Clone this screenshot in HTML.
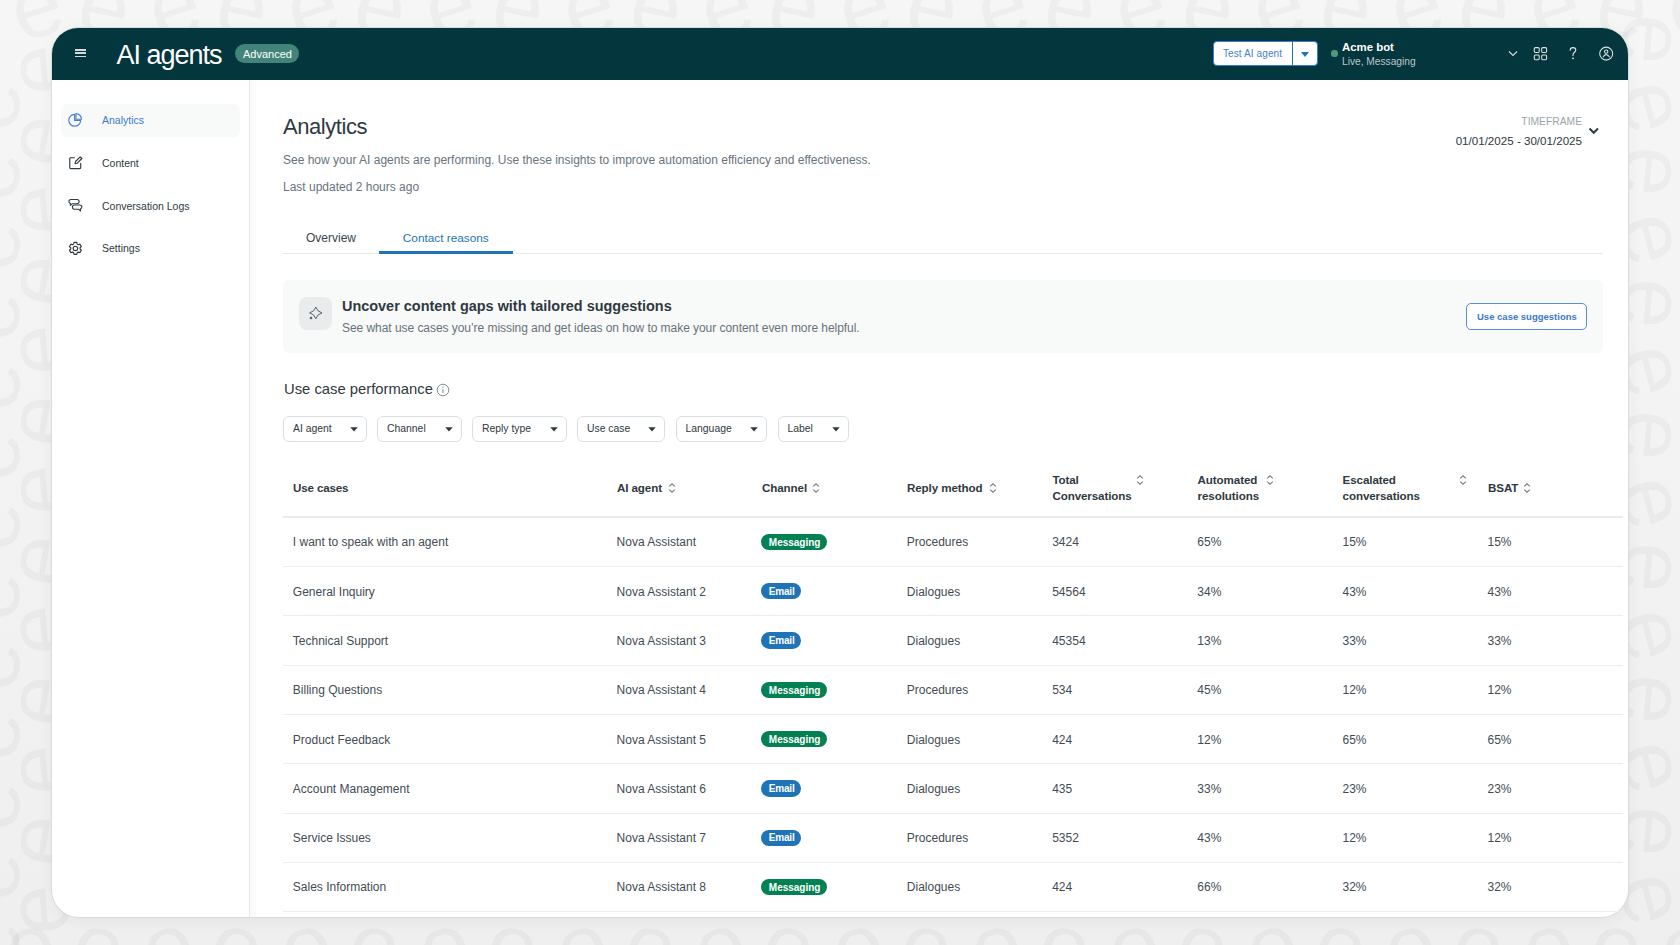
<!DOCTYPE html><html><head><meta charset="utf-8"><style>
html,body{margin:0;padding:0;width:1680px;height:945px;overflow:hidden;background:linear-gradient(#f6f6f6,#efefef);font-family:"Liberation Sans",sans-serif;}
.t{position:absolute;white-space:nowrap;}
.r{position:absolute;}
#bgp{position:absolute;left:0;top:0;width:1680px;height:945px;}
#win{position:absolute;left:52px;top:28px;width:1576px;height:889px;background:#fff;border-radius:27px;overflow:hidden;box-shadow:0 0 0 1px #d9dcde, 0 3px 16px rgba(0,0,0,0.06);}
</style></head><body>
<svg id="bgp" width="1680" height="945" viewBox="0 0 1680 945"><g font-family="Liberation Sans" font-weight="400" font-size="90" fill="#000" fill-opacity="0.03"><text x="36" y="6" text-anchor="middle" dominant-baseline="central" transform="rotate(-18 36 6)">e</text><text x="30" y="946" text-anchor="middle" dominant-baseline="central" transform="rotate(-15 30 946)">e</text><text x="105" y="6" text-anchor="middle" dominant-baseline="central" transform="rotate(12 105 6)">e</text><text x="99" y="946" text-anchor="middle" dominant-baseline="central" transform="rotate(12 99 946)">e</text><text x="174" y="6" text-anchor="middle" dominant-baseline="central" transform="rotate(-18 174 6)">e</text><text x="168" y="946" text-anchor="middle" dominant-baseline="central" transform="rotate(-15 168 946)">e</text><text x="243" y="6" text-anchor="middle" dominant-baseline="central" transform="rotate(12 243 6)">e</text><text x="237" y="946" text-anchor="middle" dominant-baseline="central" transform="rotate(12 237 946)">e</text><text x="312" y="6" text-anchor="middle" dominant-baseline="central" transform="rotate(-18 312 6)">e</text><text x="306" y="946" text-anchor="middle" dominant-baseline="central" transform="rotate(-15 306 946)">e</text><text x="381" y="6" text-anchor="middle" dominant-baseline="central" transform="rotate(12 381 6)">e</text><text x="375" y="946" text-anchor="middle" dominant-baseline="central" transform="rotate(12 375 946)">e</text><text x="450" y="6" text-anchor="middle" dominant-baseline="central" transform="rotate(-18 450 6)">e</text><text x="444" y="946" text-anchor="middle" dominant-baseline="central" transform="rotate(-15 444 946)">e</text><text x="519" y="6" text-anchor="middle" dominant-baseline="central" transform="rotate(12 519 6)">e</text><text x="513" y="946" text-anchor="middle" dominant-baseline="central" transform="rotate(12 513 946)">e</text><text x="588" y="6" text-anchor="middle" dominant-baseline="central" transform="rotate(-18 588 6)">e</text><text x="582" y="946" text-anchor="middle" dominant-baseline="central" transform="rotate(-15 582 946)">e</text><text x="657" y="6" text-anchor="middle" dominant-baseline="central" transform="rotate(12 657 6)">e</text><text x="651" y="946" text-anchor="middle" dominant-baseline="central" transform="rotate(12 651 946)">e</text><text x="726" y="6" text-anchor="middle" dominant-baseline="central" transform="rotate(-18 726 6)">e</text><text x="720" y="946" text-anchor="middle" dominant-baseline="central" transform="rotate(-15 720 946)">e</text><text x="795" y="6" text-anchor="middle" dominant-baseline="central" transform="rotate(12 795 6)">e</text><text x="789" y="946" text-anchor="middle" dominant-baseline="central" transform="rotate(12 789 946)">e</text><text x="864" y="6" text-anchor="middle" dominant-baseline="central" transform="rotate(-18 864 6)">e</text><text x="858" y="946" text-anchor="middle" dominant-baseline="central" transform="rotate(-15 858 946)">e</text><text x="933" y="6" text-anchor="middle" dominant-baseline="central" transform="rotate(12 933 6)">e</text><text x="927" y="946" text-anchor="middle" dominant-baseline="central" transform="rotate(12 927 946)">e</text><text x="1002" y="6" text-anchor="middle" dominant-baseline="central" transform="rotate(-18 1002 6)">e</text><text x="996" y="946" text-anchor="middle" dominant-baseline="central" transform="rotate(-15 996 946)">e</text><text x="1071" y="6" text-anchor="middle" dominant-baseline="central" transform="rotate(12 1071 6)">e</text><text x="1065" y="946" text-anchor="middle" dominant-baseline="central" transform="rotate(12 1065 946)">e</text><text x="1140" y="6" text-anchor="middle" dominant-baseline="central" transform="rotate(-18 1140 6)">e</text><text x="1134" y="946" text-anchor="middle" dominant-baseline="central" transform="rotate(-15 1134 946)">e</text><text x="1209" y="6" text-anchor="middle" dominant-baseline="central" transform="rotate(12 1209 6)">e</text><text x="1203" y="946" text-anchor="middle" dominant-baseline="central" transform="rotate(12 1203 946)">e</text><text x="1278" y="6" text-anchor="middle" dominant-baseline="central" transform="rotate(-18 1278 6)">e</text><text x="1272" y="946" text-anchor="middle" dominant-baseline="central" transform="rotate(-15 1272 946)">e</text><text x="1347" y="6" text-anchor="middle" dominant-baseline="central" transform="rotate(12 1347 6)">e</text><text x="1341" y="946" text-anchor="middle" dominant-baseline="central" transform="rotate(12 1341 946)">e</text><text x="1416" y="6" text-anchor="middle" dominant-baseline="central" transform="rotate(-18 1416 6)">e</text><text x="1410" y="946" text-anchor="middle" dominant-baseline="central" transform="rotate(-15 1410 946)">e</text><text x="1485" y="6" text-anchor="middle" dominant-baseline="central" transform="rotate(12 1485 6)">e</text><text x="1479" y="946" text-anchor="middle" dominant-baseline="central" transform="rotate(12 1479 946)">e</text><text x="1554" y="6" text-anchor="middle" dominant-baseline="central" transform="rotate(-18 1554 6)">e</text><text x="1548" y="946" text-anchor="middle" dominant-baseline="central" transform="rotate(-15 1548 946)">e</text><text x="1623" y="6" text-anchor="middle" dominant-baseline="central" transform="rotate(12 1623 6)">e</text><text x="1617" y="946" text-anchor="middle" dominant-baseline="central" transform="rotate(12 1617 946)">e</text><text x="1692" y="6" text-anchor="middle" dominant-baseline="central" transform="rotate(-18 1692 6)">e</text><text x="1686" y="946" text-anchor="middle" dominant-baseline="central" transform="rotate(-15 1686 946)">e</text><text x="1761" y="6" text-anchor="middle" dominant-baseline="central" transform="rotate(12 1761 6)">e</text><text x="1755" y="946" text-anchor="middle" dominant-baseline="central" transform="rotate(12 1755 946)">e</text><text x="38" y="70" text-anchor="middle" dominant-baseline="central" transform="rotate(-95 38 70)">e</text><text x="-12" y="105" text-anchor="middle" dominant-baseline="central" transform="rotate(-85 -12 105)">e</text><text x="1654" y="40" text-anchor="middle" dominant-baseline="central" transform="rotate(95 1654 40)">e</text><text x="38" y="140" text-anchor="middle" dominant-baseline="central" transform="rotate(-80 38 140)">e</text><text x="-12" y="175" text-anchor="middle" dominant-baseline="central" transform="rotate(-85 -12 175)">e</text><text x="1654" y="106" text-anchor="middle" dominant-baseline="central" transform="rotate(75 1654 106)">e</text><text x="38" y="210" text-anchor="middle" dominant-baseline="central" transform="rotate(-95 38 210)">e</text><text x="-12" y="245" text-anchor="middle" dominant-baseline="central" transform="rotate(-85 -12 245)">e</text><text x="1654" y="172" text-anchor="middle" dominant-baseline="central" transform="rotate(95 1654 172)">e</text><text x="38" y="280" text-anchor="middle" dominant-baseline="central" transform="rotate(-80 38 280)">e</text><text x="-12" y="315" text-anchor="middle" dominant-baseline="central" transform="rotate(-85 -12 315)">e</text><text x="1654" y="238" text-anchor="middle" dominant-baseline="central" transform="rotate(75 1654 238)">e</text><text x="38" y="350" text-anchor="middle" dominant-baseline="central" transform="rotate(-95 38 350)">e</text><text x="-12" y="385" text-anchor="middle" dominant-baseline="central" transform="rotate(-85 -12 385)">e</text><text x="1654" y="304" text-anchor="middle" dominant-baseline="central" transform="rotate(95 1654 304)">e</text><text x="38" y="420" text-anchor="middle" dominant-baseline="central" transform="rotate(-80 38 420)">e</text><text x="-12" y="455" text-anchor="middle" dominant-baseline="central" transform="rotate(-85 -12 455)">e</text><text x="1654" y="370" text-anchor="middle" dominant-baseline="central" transform="rotate(75 1654 370)">e</text><text x="38" y="490" text-anchor="middle" dominant-baseline="central" transform="rotate(-95 38 490)">e</text><text x="-12" y="525" text-anchor="middle" dominant-baseline="central" transform="rotate(-85 -12 525)">e</text><text x="1654" y="436" text-anchor="middle" dominant-baseline="central" transform="rotate(95 1654 436)">e</text><text x="38" y="560" text-anchor="middle" dominant-baseline="central" transform="rotate(-80 38 560)">e</text><text x="-12" y="595" text-anchor="middle" dominant-baseline="central" transform="rotate(-85 -12 595)">e</text><text x="1654" y="502" text-anchor="middle" dominant-baseline="central" transform="rotate(75 1654 502)">e</text><text x="38" y="630" text-anchor="middle" dominant-baseline="central" transform="rotate(-95 38 630)">e</text><text x="-12" y="665" text-anchor="middle" dominant-baseline="central" transform="rotate(-85 -12 665)">e</text><text x="1654" y="568" text-anchor="middle" dominant-baseline="central" transform="rotate(95 1654 568)">e</text><text x="38" y="700" text-anchor="middle" dominant-baseline="central" transform="rotate(-80 38 700)">e</text><text x="-12" y="735" text-anchor="middle" dominant-baseline="central" transform="rotate(-85 -12 735)">e</text><text x="1654" y="634" text-anchor="middle" dominant-baseline="central" transform="rotate(75 1654 634)">e</text><text x="38" y="770" text-anchor="middle" dominant-baseline="central" transform="rotate(-95 38 770)">e</text><text x="-12" y="805" text-anchor="middle" dominant-baseline="central" transform="rotate(-85 -12 805)">e</text><text x="1654" y="700" text-anchor="middle" dominant-baseline="central" transform="rotate(95 1654 700)">e</text><text x="38" y="840" text-anchor="middle" dominant-baseline="central" transform="rotate(-80 38 840)">e</text><text x="-12" y="875" text-anchor="middle" dominant-baseline="central" transform="rotate(-85 -12 875)">e</text><text x="1654" y="766" text-anchor="middle" dominant-baseline="central" transform="rotate(75 1654 766)">e</text><text x="38" y="910" text-anchor="middle" dominant-baseline="central" transform="rotate(-95 38 910)">e</text><text x="-12" y="945" text-anchor="middle" dominant-baseline="central" transform="rotate(-85 -12 945)">e</text><text x="1654" y="832" text-anchor="middle" dominant-baseline="central" transform="rotate(95 1654 832)">e</text><text x="38" y="980" text-anchor="middle" dominant-baseline="central" transform="rotate(-80 38 980)">e</text><text x="-12" y="1015" text-anchor="middle" dominant-baseline="central" transform="rotate(-85 -12 1015)">e</text><text x="1654" y="898" text-anchor="middle" dominant-baseline="central" transform="rotate(75 1654 898)">e</text></g></svg>
<div id="win"></div>
<div class="r" style="left:52px;top:28px;width:1576px;height:52px;background:#03363d;border-radius:26px 26px 0 0;"></div>
<div class="r" style="left:75px;top:49.3px;width:11px;height:1.4000000000000057px;background:#d5dadc;"></div>
<div class="r" style="left:75px;top:52.449999999999996px;width:11px;height:1.4000000000000057px;background:#d5dadc;"></div>
<div class="r" style="left:75px;top:55.599999999999994px;width:11px;height:1.4000000000000057px;background:#d5dadc;"></div>
<div class="t" style="left:116.5px;top:42px;font-size:27px;line-height:27px;color:#ffffff;letter-spacing:-1.0px;">AI agents</div>
<div class="r" style="left:235px;top:44px;width:64px;height:19px;background:#43847a;border-radius:10px;"></div>
<div class="t" style="left:243px;top:49px;font-size:11px;line-height:11px;color:#ffffff;">Advanced</div>
<div class="r" style="left:1213px;top:40.8px;width:105px;height:25.700000000000003px;background:#fff;border:1px solid #3f7bcc;border-radius:4px;box-sizing:border-box;"></div>
<div class="r" style="left:1292px;top:41px;width:1px;height:25px;background:#1f73b7;"></div>
<div class="t" style="left:1223px;top:49px;font-size:10px;line-height:10px;color:#4a80cf;letter-spacing:0.1px;">Test AI agent</div>
<svg class="r" style="left:1301px;top:52px" width="8" height="5" viewBox="0 0 8 5" fill="none"><path d="M0 0H8L4 5Z" fill="#1f73b7"/></svg>
<div class="r" style="left:1331px;top:50.3px;width:6.5px;height:6.5px;background:#4e9a80;border-radius:50%;"></div>
<div class="t" style="left:1342px;top:42px;font-size:11.4px;line-height:11.4px;color:#ffffff;font-weight:700;">Acme bot</div>
<div class="t" style="left:1342px;top:57px;font-size:10.2px;line-height:10.2px;color:#bfc6ca;">Live, Messaging</div>
<svg class="r" style="left:1508px;top:50px" width="10" height="8" viewBox="0 0 10 8" fill="none"><path d="M1 1.5L5 5.5L9 1.5" stroke="#d9dcde" stroke-width="1.1"/></svg>
<svg class="r" style="left:1533px;top:46px" width="16" height="16" viewBox="0 0 16 16" fill="none"><rect x="1.3" y="1.6" width="4.9" height="4.8" rx="1.1" stroke="#dfe3e4" stroke-width="1.05"/><rect x="8.7" y="1.6" width="4.9" height="4.8" rx="1.1" stroke="#dfe3e4" stroke-width="1.05"/><rect x="1.3" y="8.9" width="4.9" height="4.8" rx="1.1" stroke="#dfe3e4" stroke-width="1.05"/><rect x="8.7" y="8.9" width="4.9" height="4.8" rx="1.1" stroke="#dfe3e4" stroke-width="1.05"/></svg>
<svg class="r" style="left:1568px;top:46px" width="10" height="15" viewBox="0 0 10 15" fill="none"><path d="M2.2 4.3C2.2 2.6 3.4 1.6 5 1.6C6.6 1.6 7.8 2.6 7.8 4.1C7.8 6.2 5 6.3 5 8.8V9.6" stroke="#e6e9ea" stroke-width="1.1" stroke-linecap="round"/><circle cx="5" cy="12.3" r="0.9" fill="#e6e9ea"/></svg>
<svg class="r" style="left:1598px;top:46px" width="16" height="16" viewBox="0 0 16 16" fill="none"><circle cx="8.2" cy="7.6" r="6.5" stroke="#dfe3e4" stroke-width="1.05"/><circle cx="8.2" cy="5.6" r="1.7" stroke="#dfe3e4" stroke-width="1.05"/><path d="M5.1 10.9C5.9 9.4 6.9 8.6 8.2 8.6C9.5 8.6 10.5 9.4 11.4 10.9" stroke="#dfe3e4" stroke-width="1.05" stroke-linecap="round"/></svg>
<div class="r" style="left:249px;top:80px;width:1px;height:837px;background:#e4e7e9;"></div>
<div class="r" style="left:250px;top:80px;width:6px;height:837px;background:#fbfbfb;"></div>
<div class="r" style="left:61px;top:103.5px;width:179px;height:33.5px;background:#f8f9f9;border-radius:7px;"></div>
<svg class="r" style="left:67px;top:112px" width="16" height="16" viewBox="0 0 16 16" fill="none"><path d="M7.6 2.4A5.9 5.9 0 1 0 13.6 8.4H7.6Z" stroke="#4a7fd0" stroke-width="1.15" stroke-linejoin="round"/><path d="M8.9 1.6A5.6 5.6 0 0 1 14.5 7.2H8.9Z" stroke="#4a7fd0" stroke-width="1.15" stroke-linejoin="round"/></svg>
<div class="t" style="left:102px;top:115px;font-size:10.5px;line-height:10.5px;color:#4079cc;">Analytics</div>
<svg class="r" style="left:67px;top:155px" width="16" height="16" viewBox="0 0 16 16" fill="none"><path d="M7.4 2.7H3.7C3.1 2.7 2.8 3 2.8 3.6V12.7C2.8 13.3 3.1 13.6 3.7 13.6H12.7C13.3 13.6 13.7 13.3 13.7 12.7V8.4" stroke="#2f3941" stroke-width="1.15" stroke-linecap="round"/><path d="M13.2 1.8L14.9 3.5L10.2 8.2L8.1 8.6L8.5 6.5Z" stroke="#2f3941" stroke-width="1.15" stroke-linejoin="round"/></svg>
<div class="t" style="left:102px;top:158px;font-size:10.5px;line-height:10.5px;color:#2f3941;">Content</div>
<svg class="r" style="left:67px;top:198px" width="16" height="16" viewBox="0 0 16 16" fill="none"><path d="M4 1.5H10C11.2 1.5 12.1 2.4 12.1 3.6C12.1 4.8 11.2 5.7 10 5.7H5.3L3.4 7.4V5.5C2.5 5.2 1.9 4.5 1.9 3.6C1.9 2.4 2.8 1.5 4 1.5Z" stroke="#2f3941" stroke-width="1.1" stroke-linejoin="round"/><path d="M7.5 7H12.7C13.9 7 14.8 7.9 14.8 9.1C14.8 10 14.3 10.7 13.5 11V13L11.6 11.2H7.5C6.3 11.2 5.4 10.3 5.4 9.1C5.4 7.9 6.3 7 7.5 7Z" stroke="#2f3941" stroke-width="1.1" stroke-linejoin="round"/></svg>
<div class="t" style="left:102px;top:201px;font-size:10.5px;line-height:10.5px;color:#2f3941;">Conversation Logs</div>
<svg class="r" style="left:67px;top:241px" width="16" height="16" viewBox="0 0 16 16" fill="none"><path d="M6.64 3.04 L7.01 1.36 L9.79 1.36 L10.16 3.04 L11.29 3.70 L12.93 3.17 L14.33 5.59 L13.05 6.75 L13.05 8.05 L14.33 9.21 L12.93 11.63 L11.29 11.10 L10.16 11.76 L9.79 13.44 L7.01 13.44 L6.64 11.76 L5.51 11.10 L3.87 11.63 L2.47 9.21 L3.75 8.05 L3.75 6.75 L2.47 5.59 L3.87 3.17 L5.51 3.70Z" stroke="#2f3941" stroke-width="1.15" stroke-linejoin="round"/><circle cx="8.4" cy="7.4" r="2.2" stroke="#2f3941" stroke-width="1.15"/></svg>
<div class="t" style="left:102px;top:243px;font-size:10.5px;line-height:10.5px;color:#2f3941;">Settings</div>
<div class="t" style="left:283px;top:116px;font-size:22px;line-height:22px;color:#2f3941;letter-spacing:-0.45px;">Analytics</div>
<div class="t" style="left:283px;top:154px;font-size:12px;line-height:12px;color:#68737d;">See how your AI agents are performing. Use these insights to improve automation efficiency and effectiveness.</div>
<div class="t" style="left:283px;top:181px;font-size:12px;line-height:12px;color:#68737d;">Last updated 2 hours ago</div>
<div class="t" style="right:98px;top:117px;font-size:10.3px;line-height:10.3px;color:#9aa4aa;">TIMEFRAME</div>
<div class="t" style="right:98px;top:135px;font-size:11.6px;line-height:11.6px;color:#2f3941;">01/01/2025 - 30/01/2025</div>
<svg class="r" style="left:1588px;top:126px" width="12" height="10" viewBox="0 0 12 10" fill="none"><path d="M1.5 2.5L5.75 6.75L10 2.5" stroke="#2f3941" stroke-width="2"/></svg>
<div class="t" style="left:306px;top:232px;font-size:12px;line-height:12px;color:#3b454d;">Overview</div>
<div class="t" style="left:402.8px;top:233px;font-size:11.8px;line-height:11.8px;color:#1f73b7;">Contact reasons</div>
<div class="r" style="left:283px;top:253px;width:1320px;height:1.1999999999999886px;background:#e6e8ea;"></div>
<div class="r" style="left:379px;top:251px;width:134px;height:3px;background:#1f73b7;"></div>
<div class="r" style="left:283px;top:280px;width:1320px;height:73px;background:#f8f9f9;border-radius:6px;"></div>
<div class="r" style="left:299px;top:297px;width:33px;height:33px;background:#e9ebed;border-radius:8px;"></div>
<svg class="r" style="left:306px;top:304px" width="20" height="20" viewBox="0 0 20 20" fill="none"><path d="M9.8 3.0500000000000007Q11.100000000000001 7.6000000000000005 16.0 8.9Q11.100000000000001 10.200000000000001 9.8 14.75Q8.5 10.200000000000001 3.6000000000000005 8.9Q8.5 7.6000000000000005 9.8 3.0500000000000007Z" stroke="#5a646b" stroke-width="1" stroke-linejoin="round"/><circle cx="5" cy="14" r="1.3" fill="#5a646b"/></svg>
<div class="t" style="left:342px;top:299px;font-size:14.45px;line-height:14.45px;color:#2f3941;font-weight:700;">Uncover content gaps with tailored suggestions</div>
<div class="t" style="left:342px;top:322px;font-size:12px;line-height:12px;color:#68737d;letter-spacing:-0.05px;">See what use cases you’re missing and get ideas on how to make your content even more helpful.</div>
<div class="r" style="left:1466px;top:303px;width:121px;height:27px;background:#fff;border:1px solid #5d8dd8;border-radius:5px;box-sizing:border-box;"></div>
<div class="t" style="left:1477px;top:312px;font-size:9.5px;line-height:9.5px;color:#3d78c8;font-weight:700;">Use case suggestions</div>
<div class="t" style="left:284px;top:382px;font-size:14.8px;line-height:14.8px;color:#2f3941;">Use case performance</div>
<svg class="r" style="left:436px;top:383px" width="14" height="14" viewBox="0 0 14 14" fill="none"><circle cx="7" cy="7" r="5.8" stroke="#87919a" stroke-width="1"/><path d="M7 6V10" stroke="#87919a" stroke-width="1.1"/><circle cx="7" cy="4.2" r="0.7" fill="#87919a"/></svg>
<div class="r" style="left:283px;top:415.5px;width:84px;height:26.0px;border:1px solid #dcdfe2;border-radius:6px;box-sizing:border-box;background:#fff;"></div>
<div class="t" style="left:293px;top:424px;font-size:10.4px;line-height:10.4px;color:#2f3941;">AI agent</div>
<svg class="r" style="left:350px;top:426.5px" width="8" height="5" viewBox="0 0 8 5" fill="none"><path d="M0.3 0.3H7.7L4 4.6Z" fill="#2f3941"/></svg>
<div class="r" style="left:377px;top:415.5px;width:85px;height:26.0px;border:1px solid #dcdfe2;border-radius:6px;box-sizing:border-box;background:#fff;"></div>
<div class="t" style="left:387px;top:424px;font-size:10.4px;line-height:10.4px;color:#2f3941;">Channel</div>
<svg class="r" style="left:445px;top:426.5px" width="8" height="5" viewBox="0 0 8 5" fill="none"><path d="M0.3 0.3H7.7L4 4.6Z" fill="#2f3941"/></svg>
<div class="r" style="left:472px;top:415.5px;width:95px;height:26.0px;border:1px solid #dcdfe2;border-radius:6px;box-sizing:border-box;background:#fff;"></div>
<div class="t" style="left:482px;top:424px;font-size:10.4px;line-height:10.4px;color:#2f3941;">Reply type</div>
<svg class="r" style="left:550px;top:426.5px" width="8" height="5" viewBox="0 0 8 5" fill="none"><path d="M0.3 0.3H7.7L4 4.6Z" fill="#2f3941"/></svg>
<div class="r" style="left:577px;top:415.5px;width:88px;height:26.0px;border:1px solid #dcdfe2;border-radius:6px;box-sizing:border-box;background:#fff;"></div>
<div class="t" style="left:587px;top:424px;font-size:10.4px;line-height:10.4px;color:#2f3941;">Use case</div>
<svg class="r" style="left:648px;top:426.5px" width="8" height="5" viewBox="0 0 8 5" fill="none"><path d="M0.3 0.3H7.7L4 4.6Z" fill="#2f3941"/></svg>
<div class="r" style="left:675.5px;top:415.5px;width:91.5px;height:26.0px;border:1px solid #dcdfe2;border-radius:6px;box-sizing:border-box;background:#fff;"></div>
<div class="t" style="left:685.5px;top:424px;font-size:10.4px;line-height:10.4px;color:#2f3941;">Language</div>
<svg class="r" style="left:750px;top:426.5px" width="8" height="5" viewBox="0 0 8 5" fill="none"><path d="M0.3 0.3H7.7L4 4.6Z" fill="#2f3941"/></svg>
<div class="r" style="left:777.5px;top:415.5px;width:71.5px;height:26.0px;border:1px solid #dcdfe2;border-radius:6px;box-sizing:border-box;background:#fff;"></div>
<div class="t" style="left:787.5px;top:424px;font-size:10.4px;line-height:10.4px;color:#2f3941;">Label</div>
<svg class="r" style="left:832px;top:426.5px" width="8" height="5" viewBox="0 0 8 5" fill="none"><path d="M0.3 0.3H7.7L4 4.6Z" fill="#2f3941"/></svg>
<div class="t" style="left:293px;top:482px;font-size:11.6px;line-height:11.6px;color:#2f3941;font-weight:700;letter-spacing:-0.15px;">Use cases</div>
<div class="t" style="left:617px;top:482px;font-size:11.6px;line-height:11.6px;color:#2f3941;font-weight:700;letter-spacing:-0.1px;">AI agent</div>
<svg class="r" style="left:668px;top:483px" width="8" height="10" viewBox="0 0 8 10" fill="none"><path d="M1.2 3.3L4 0.8L6.8 3.3M1.2 6.7L4 9.2L6.8 6.7" stroke="#737d85" stroke-width="1.1"/></svg>
<div class="t" style="left:762px;top:482px;font-size:11.6px;line-height:11.6px;color:#2f3941;font-weight:700;letter-spacing:-0.1px;">Channel</div>
<svg class="r" style="left:812px;top:483px" width="8" height="10" viewBox="0 0 8 10" fill="none"><path d="M1.2 3.3L4 0.8L6.8 3.3M1.2 6.7L4 9.2L6.8 6.7" stroke="#737d85" stroke-width="1.1"/></svg>
<div class="t" style="left:907px;top:482px;font-size:11.6px;line-height:11.6px;color:#2f3941;font-weight:700;letter-spacing:-0.1px;">Reply method</div>
<svg class="r" style="left:988.5px;top:483px" width="8" height="10" viewBox="0 0 8 10" fill="none"><path d="M1.2 3.3L4 0.8L6.8 3.3M1.2 6.7L4 9.2L6.8 6.7" stroke="#737d85" stroke-width="1.1"/></svg>
<div class="t" style="left:1052.4px;top:474px;font-size:11.6px;line-height:11.6px;color:#2f3941;font-weight:700;letter-spacing:-0.1px;">Total</div>
<div class="t" style="left:1052.4px;top:490px;font-size:11.6px;line-height:11.6px;color:#2f3941;font-weight:700;letter-spacing:-0.1px;">Conversations</div>
<svg class="r" style="left:1136px;top:474.5px" width="8" height="10" viewBox="0 0 8 10" fill="none"><path d="M1.2 3.3L4 0.8L6.8 3.3M1.2 6.7L4 9.2L6.8 6.7" stroke="#737d85" stroke-width="1.1"/></svg>
<div class="t" style="left:1197.6px;top:474px;font-size:11.6px;line-height:11.6px;color:#2f3941;font-weight:700;letter-spacing:-0.1px;">Automated</div>
<div class="t" style="left:1197.6px;top:490px;font-size:11.6px;line-height:11.6px;color:#2f3941;font-weight:700;letter-spacing:-0.1px;">resolutions</div>
<svg class="r" style="left:1265.5px;top:474.5px" width="8" height="10" viewBox="0 0 8 10" fill="none"><path d="M1.2 3.3L4 0.8L6.8 3.3M1.2 6.7L4 9.2L6.8 6.7" stroke="#737d85" stroke-width="1.1"/></svg>
<div class="t" style="left:1342.6px;top:474px;font-size:11.6px;line-height:11.6px;color:#2f3941;font-weight:700;letter-spacing:-0.1px;">Escalated</div>
<div class="t" style="left:1342.6px;top:490px;font-size:11.6px;line-height:11.6px;color:#2f3941;font-weight:700;letter-spacing:-0.1px;">conversations</div>
<svg class="r" style="left:1459px;top:474.5px" width="8" height="10" viewBox="0 0 8 10" fill="none"><path d="M1.2 3.3L4 0.8L6.8 3.3M1.2 6.7L4 9.2L6.8 6.7" stroke="#737d85" stroke-width="1.1"/></svg>
<div class="t" style="left:1488px;top:482px;font-size:11.6px;line-height:11.6px;color:#2f3941;font-weight:700;letter-spacing:-0.1px;">BSAT</div>
<svg class="r" style="left:1522.5px;top:483px" width="8" height="10" viewBox="0 0 8 10" fill="none"><path d="M1.2 3.3L4 0.8L6.8 3.3M1.2 6.7L4 9.2L6.8 6.7" stroke="#737d85" stroke-width="1.1"/></svg>
<div class="r" style="left:283px;top:516px;width:1340px;height:2px;background:#e9ebed;"></div>
<div class="t" style="left:292.8px;top:536px;font-size:12px;line-height:12px;color:#424c54;">I want to speak with an agent</div>
<div class="t" style="left:616.6px;top:536px;font-size:12px;line-height:12px;color:#424c54;">Nova Assistant</div>
<div class="r" style="left:761.2px;top:533.8px;width:66.0px;height:16.300000000000068px;background:#038153;border-radius:9px;"></div>
<div class="t" style="left:768.8px;top:538px;font-size:10px;line-height:10px;color:#ffffff;font-weight:700;letter-spacing:0px;">Messaging</div>
<div class="t" style="left:906.8px;top:536px;font-size:12px;line-height:12px;color:#424c54;">Procedures</div>
<div class="t" style="left:1052.2px;top:536px;font-size:12px;line-height:12px;color:#424c54;">3424</div>
<div class="t" style="left:1197.3px;top:536px;font-size:12px;line-height:12px;color:#424c54;">65%</div>
<div class="t" style="left:1342.5px;top:536px;font-size:12px;line-height:12px;color:#424c54;">15%</div>
<div class="t" style="left:1487.5px;top:536px;font-size:12px;line-height:12px;color:#424c54;">15%</div>
<div class="r" style="left:283px;top:566.0px;width:1340px;height:1.0px;background:#eceef0;"></div>
<div class="t" style="left:292.8px;top:586px;font-size:12px;line-height:12px;color:#424c54;">General Inquiry</div>
<div class="t" style="left:616.6px;top:586px;font-size:12px;line-height:12px;color:#424c54;">Nova Assistant 2</div>
<div class="r" style="left:761.2px;top:583.1px;width:40.0px;height:16.299999999999955px;background:#1f73b7;border-radius:9px;"></div>
<div class="t" style="left:768.8px;top:587px;font-size:10px;line-height:10px;color:#ffffff;font-weight:700;letter-spacing:-0.2px;">Email</div>
<div class="t" style="left:906.8px;top:586px;font-size:12px;line-height:12px;color:#424c54;">Dialogues</div>
<div class="t" style="left:1052.2px;top:586px;font-size:12px;line-height:12px;color:#424c54;">54564</div>
<div class="t" style="left:1197.3px;top:586px;font-size:12px;line-height:12px;color:#424c54;">34%</div>
<div class="t" style="left:1342.5px;top:586px;font-size:12px;line-height:12px;color:#424c54;">43%</div>
<div class="t" style="left:1487.5px;top:586px;font-size:12px;line-height:12px;color:#424c54;">43%</div>
<div class="r" style="left:283px;top:615.3px;width:1340px;height:1.0px;background:#eceef0;"></div>
<div class="t" style="left:292.8px;top:635px;font-size:12px;line-height:12px;color:#424c54;">Technical Support</div>
<div class="t" style="left:616.6px;top:635px;font-size:12px;line-height:12px;color:#424c54;">Nova Assistant 3</div>
<div class="r" style="left:761.2px;top:632.4px;width:40.0px;height:16.300000000000068px;background:#1f73b7;border-radius:9px;"></div>
<div class="t" style="left:768.8px;top:636px;font-size:10px;line-height:10px;color:#ffffff;font-weight:700;letter-spacing:-0.2px;">Email</div>
<div class="t" style="left:906.8px;top:635px;font-size:12px;line-height:12px;color:#424c54;">Dialogues</div>
<div class="t" style="left:1052.2px;top:635px;font-size:12px;line-height:12px;color:#424c54;">45354</div>
<div class="t" style="left:1197.3px;top:635px;font-size:12px;line-height:12px;color:#424c54;">13%</div>
<div class="t" style="left:1342.5px;top:635px;font-size:12px;line-height:12px;color:#424c54;">33%</div>
<div class="t" style="left:1487.5px;top:635px;font-size:12px;line-height:12px;color:#424c54;">33%</div>
<div class="r" style="left:283px;top:664.6px;width:1340px;height:1.0px;background:#eceef0;"></div>
<div class="t" style="left:292.8px;top:684px;font-size:12px;line-height:12px;color:#424c54;">Billing Questions</div>
<div class="t" style="left:616.6px;top:684px;font-size:12px;line-height:12px;color:#424c54;">Nova Assistant 4</div>
<div class="r" style="left:761.2px;top:681.7px;width:66.0px;height:16.299999999999955px;background:#038153;border-radius:9px;"></div>
<div class="t" style="left:768.8px;top:686px;font-size:10px;line-height:10px;color:#ffffff;font-weight:700;letter-spacing:0px;">Messaging</div>
<div class="t" style="left:906.8px;top:684px;font-size:12px;line-height:12px;color:#424c54;">Procedures</div>
<div class="t" style="left:1052.2px;top:684px;font-size:12px;line-height:12px;color:#424c54;">534</div>
<div class="t" style="left:1197.3px;top:684px;font-size:12px;line-height:12px;color:#424c54;">45%</div>
<div class="t" style="left:1342.5px;top:684px;font-size:12px;line-height:12px;color:#424c54;">12%</div>
<div class="t" style="left:1487.5px;top:684px;font-size:12px;line-height:12px;color:#424c54;">12%</div>
<div class="r" style="left:283px;top:713.9px;width:1340px;height:1.0px;background:#eceef0;"></div>
<div class="t" style="left:292.8px;top:734px;font-size:12px;line-height:12px;color:#424c54;">Product Feedback</div>
<div class="t" style="left:616.6px;top:734px;font-size:12px;line-height:12px;color:#424c54;">Nova Assistant 5</div>
<div class="r" style="left:761.2px;top:731.0px;width:66.0px;height:16.299999999999955px;background:#038153;border-radius:9px;"></div>
<div class="t" style="left:768.8px;top:735px;font-size:10px;line-height:10px;color:#ffffff;font-weight:700;letter-spacing:0px;">Messaging</div>
<div class="t" style="left:906.8px;top:734px;font-size:12px;line-height:12px;color:#424c54;">Dialogues</div>
<div class="t" style="left:1052.2px;top:734px;font-size:12px;line-height:12px;color:#424c54;">424</div>
<div class="t" style="left:1197.3px;top:734px;font-size:12px;line-height:12px;color:#424c54;">12%</div>
<div class="t" style="left:1342.5px;top:734px;font-size:12px;line-height:12px;color:#424c54;">65%</div>
<div class="t" style="left:1487.5px;top:734px;font-size:12px;line-height:12px;color:#424c54;">65%</div>
<div class="r" style="left:283px;top:763.2px;width:1340px;height:1.0px;background:#eceef0;"></div>
<div class="t" style="left:292.8px;top:783px;font-size:12px;line-height:12px;color:#424c54;">Account Management</div>
<div class="t" style="left:616.6px;top:783px;font-size:12px;line-height:12px;color:#424c54;">Nova Assistant 6</div>
<div class="r" style="left:761.2px;top:780.3px;width:40.0px;height:16.300000000000068px;background:#1f73b7;border-radius:9px;"></div>
<div class="t" style="left:768.8px;top:784px;font-size:10px;line-height:10px;color:#ffffff;font-weight:700;letter-spacing:-0.2px;">Email</div>
<div class="t" style="left:906.8px;top:783px;font-size:12px;line-height:12px;color:#424c54;">Dialogues</div>
<div class="t" style="left:1052.2px;top:783px;font-size:12px;line-height:12px;color:#424c54;">435</div>
<div class="t" style="left:1197.3px;top:783px;font-size:12px;line-height:12px;color:#424c54;">33%</div>
<div class="t" style="left:1342.5px;top:783px;font-size:12px;line-height:12px;color:#424c54;">23%</div>
<div class="t" style="left:1487.5px;top:783px;font-size:12px;line-height:12px;color:#424c54;">23%</div>
<div class="r" style="left:283px;top:812.5px;width:1340px;height:1.0px;background:#eceef0;"></div>
<div class="t" style="left:292.8px;top:832px;font-size:12px;line-height:12px;color:#424c54;">Service Issues</div>
<div class="t" style="left:616.6px;top:832px;font-size:12px;line-height:12px;color:#424c54;">Nova Assistant 7</div>
<div class="r" style="left:761.2px;top:829.6px;width:40.0px;height:16.299999999999955px;background:#1f73b7;border-radius:9px;"></div>
<div class="t" style="left:768.8px;top:833px;font-size:10px;line-height:10px;color:#ffffff;font-weight:700;letter-spacing:-0.2px;">Email</div>
<div class="t" style="left:906.8px;top:832px;font-size:12px;line-height:12px;color:#424c54;">Procedures</div>
<div class="t" style="left:1052.2px;top:832px;font-size:12px;line-height:12px;color:#424c54;">5352</div>
<div class="t" style="left:1197.3px;top:832px;font-size:12px;line-height:12px;color:#424c54;">43%</div>
<div class="t" style="left:1342.5px;top:832px;font-size:12px;line-height:12px;color:#424c54;">12%</div>
<div class="t" style="left:1487.5px;top:832px;font-size:12px;line-height:12px;color:#424c54;">12%</div>
<div class="r" style="left:283px;top:861.8px;width:1340px;height:1.0px;background:#eceef0;"></div>
<div class="t" style="left:292.8px;top:881px;font-size:12px;line-height:12px;color:#424c54;">Sales Information</div>
<div class="t" style="left:616.6px;top:881px;font-size:12px;line-height:12px;color:#424c54;">Nova Assistant 8</div>
<div class="r" style="left:761.2px;top:878.9px;width:66.0px;height:16.300000000000068px;background:#038153;border-radius:9px;"></div>
<div class="t" style="left:768.8px;top:883px;font-size:10px;line-height:10px;color:#ffffff;font-weight:700;letter-spacing:0px;">Messaging</div>
<div class="t" style="left:906.8px;top:881px;font-size:12px;line-height:12px;color:#424c54;">Dialogues</div>
<div class="t" style="left:1052.2px;top:881px;font-size:12px;line-height:12px;color:#424c54;">424</div>
<div class="t" style="left:1197.3px;top:881px;font-size:12px;line-height:12px;color:#424c54;">66%</div>
<div class="t" style="left:1342.5px;top:881px;font-size:12px;line-height:12px;color:#424c54;">32%</div>
<div class="t" style="left:1487.5px;top:881px;font-size:12px;line-height:12px;color:#424c54;">32%</div>
<div class="r" style="left:283px;top:911.1px;width:1340px;height:1.0px;background:#eceef0;"></div>
</body></html>
